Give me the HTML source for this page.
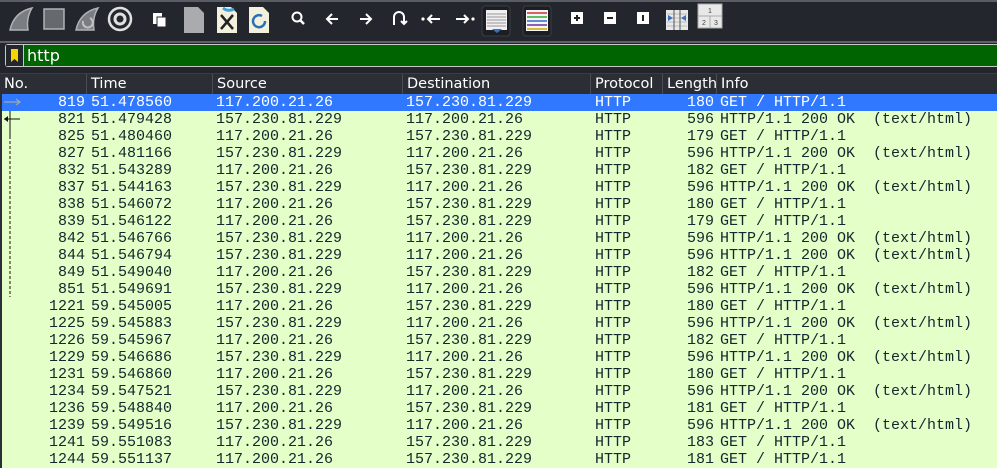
<!DOCTYPE html>
<html><head><meta charset="utf-8"><style>
*{margin:0;padding:0;box-sizing:border-box}
body{width:997px;height:468px;overflow:hidden;background:#22252b;position:relative;font-family:"DejaVu Sans","Liberation Sans",sans-serif}
.tb{position:absolute;left:0;top:0;width:997px;height:42px;background:#23262c;border-top:2px solid #5a5d63}
.sep{position:absolute;left:0;top:41px;width:997px;height:2px;background:#5f6268}
.ic{position:absolute;top:6px}
.flt{position:absolute;left:5px;top:44px;width:992px;height:23px;border:1px solid #c8c8c8;border-right:none;border-radius:3px 0 0 3px;background:#006400}
.bm{position:absolute;left:0;top:0;width:18px;height:21px;background:#23262c;border-right:1px solid #c8c8c8}
.flt span{position:absolute;left:21px;top:1px;color:#fff;font-size:16px}
.hdr{position:absolute;left:0;top:73px;width:997px;height:21px;background:#2b2e35;border-top:1px solid #3a3d44}
.hdr div{position:absolute;top:0;height:20px;color:#fff;font-size:14.5px;line-height:21px;padding-left:4px;border-left:1px solid #4a4d54}
.rows{position:absolute;left:0;top:94px;width:997px}
.r{height:17px;background:#e4ffc7;color:#12272e;font-family:"Liberation Mono","DejaVu Sans Mono",monospace;font-size:15px;line-height:17px;position:relative;white-space:pre}
.r.s{background:#2f78ff;color:#fff}
.r span{position:absolute;top:0}
.lb{position:absolute;left:0;top:94px;width:2px;height:374px;background:#2b2e35}
</style></head><body>
<div class="tb"></div><div class="sep"></div>
<svg class="ic" style="left:8px" width="26" height="26"><path d="M2 24 Q6 6 24 2 Q18 12 20 24 Z" fill="#7a7d82" stroke="#b0b2b5" stroke-width="1.5"/></svg>
<svg class="ic" style="left:42px" width="24" height="26"><rect x="2" y="3" width="20" height="20" fill="#66696e" stroke="#b0b2b5" stroke-width="1.5"/></svg>
<svg class="ic" style="left:74px" width="26" height="26"><path d="M2 24 Q6 6 24 2 Q18 12 20 24 Z" fill="#7a7d82" stroke="#b0b2b5" stroke-width="1.5"/><path d="M9 15 a5 5 0 1 0 7 -3" fill="none" stroke="#c0c2c5" stroke-width="2"/></svg>
<svg class="ic" style="left:107px" width="26" height="26"><circle cx="13" cy="13" r="11" fill="none" stroke="#e0e0e0" stroke-width="2.5"/><circle cx="13" cy="13" r="5" fill="none" stroke="#e0e0e0" stroke-width="3"/></svg>
<svg class="ic" style="left:151px" width="18" height="26"><rect x="2" y="7" width="9" height="11" fill="#fff"/><rect x="6" y="11" width="9" height="10" fill="#fff" stroke="#23262c"/></svg>
<svg class="ic" style="left:183px" width="22" height="28"><path d="M1 1 H15 L21 7 V27 H1 Z" fill="#a9abae"/></svg>
<svg class="ic" style="left:216px" width="22" height="28"><path d="M1 1 H15 L21 7 V27 H1 Z" fill="#f3f0dc"/><path d="M5 9 L17 23 M17 9 L5 23" stroke="#222" stroke-width="2.5"/><path d="M7 2 Q12 6 18 3" stroke="#3aa0e0" stroke-width="3" fill="none"/></svg>
<svg class="ic" style="left:248px" width="22" height="28"><path d="M1 1 H15 L21 7 V27 H1 Z" fill="#f3f0dc"/><path d="M14 10 a6 6 0 1 0 3 5" fill="none" stroke="#2a6fb8" stroke-width="2.5"/></svg>
<svg class="ic" style="left:288px" width="20" height="26"><circle cx="9" cy="11" r="4.5" fill="none" stroke="#fff" stroke-width="2"/><path d="M12 14 L16 18" stroke="#fff" stroke-width="2.5"/></svg>
<svg class="ic" style="left:322px" width="20" height="26"><path d="M16 13 H5 M10 8 L5 13 L10 18" fill="none" stroke="#fff" stroke-width="2"/></svg>
<svg class="ic" style="left:356px" width="20" height="26"><path d="M4 13 H15 M10 8 L15 13 L10 18" fill="none" stroke="#fff" stroke-width="2"/></svg>
<svg class="ic" style="left:389px" width="20" height="26"><path d="M5 19 V11 a5 5 0 0 1 10 0 V17 M12 15 L15 18 L18 15" fill="none" stroke="#fff" stroke-width="2"/></svg>
<svg class="ic" style="left:420px" width="22" height="26"><circle cx="3" cy="13" r="1.6" fill="#fff"/><path d="M20 13 H8 M12 9 L8 13 L12 17" fill="none" stroke="#fff" stroke-width="2"/></svg>
<svg class="ic" style="left:454px" width="22" height="26"><circle cx="19" cy="13" r="1.6" fill="#fff"/><path d="M2 13 H14 M10 9 L14 13 L10 17" fill="none" stroke="#fff" stroke-width="2"/></svg>
<svg class="ic" style="left:481px;top:5px" width="30" height="32"><rect x="1" y="1" width="28" height="30" rx="3" fill="#1c1e23" stroke="#3c3f45"/><rect x="5" y="5" width="21" height="20" fill="#f0f0f0"/><path d="M6 9H25M6 12H25M6 15H25M6 18H25M6 21H25" stroke="#999"/><path d="M11 24 H21 L16 28 Z" fill="#3a70c0"/></svg>
<svg class="ic" style="left:522px;top:5px" width="30" height="32"><rect x="1" y="1" width="28" height="30" rx="3" fill="#1c1e23" stroke="#3c3f45"/><rect x="4" y="5" width="22" height="21" fill="#f5f5f5"/><path d="M5 8H25" stroke="#c33" stroke-width="1.5"/><path d="M5 12H25" stroke="#3a3" stroke-width="1.5"/><path d="M5 16H25" stroke="#36c" stroke-width="1.5"/><path d="M5 20H25" stroke="#639" stroke-width="1.5"/><path d="M5 24H25" stroke="#ca0" stroke-width="1.5"/></svg>
<svg class="ic" style="left:570px" width="14" height="26"><rect x="1" y="6" width="12" height="12" fill="#fff"/><path d="M4 12H10M7 9V15" stroke="#222" stroke-width="2"/></svg>
<svg class="ic" style="left:603px" width="14" height="26"><rect x="1" y="6" width="12" height="12" fill="#fff"/><path d="M4 12H10" stroke="#222" stroke-width="2"/></svg>
<svg class="ic" style="left:636px" width="14" height="26"><rect x="1" y="6" width="12" height="12" fill="#fff"/><path d="M7 9V15" stroke="#222" stroke-width="2"/></svg>
<svg class="ic" style="left:665px" width="24" height="26"><rect x="1" y="4" width="22" height="20" fill="#e8e8e8"/><path d="M2 8H22M2 12H22M2 16H22M2 20H22" stroke="#bbb"/><path d="M9 4V24M15 4V24" stroke="#555"/><path d="M3 9L8 12L3 15Z M21 9L16 12L21 15Z" fill="#3a70c0"/></svg>
<svg class="ic" style="left:697px;top:3px" width="26" height="28"><rect x="1" y="1" width="24" height="24" fill="#e8e8e8" stroke="#aaa"/><path d="M1 13H25M13 13V25" stroke="#aaa"/><text x="13" y="10" font-size="7" text-anchor="middle" fill="#444" font-family="Liberation Sans">1</text><text x="7" y="22" font-size="7" text-anchor="middle" fill="#444" font-family="Liberation Sans">2</text><text x="19" y="22" font-size="7" text-anchor="middle" fill="#444" font-family="Liberation Sans">3</text></svg>

<div class="flt"><div class="bm"><svg width="17" height="21"><path d="M5 4H12V17L8.5 14L5 17Z" fill="#f5d400"/></svg></div><span>http</span></div>

<div class="hdr">
<div style="left:0;width:86px;border-left:none">No.</div>
<div style="left:86px;width:126px">Time</div>
<div style="left:212px;width:190px">Source</div>
<div style="left:402px;width:188px">Destination</div>
<div style="left:590px;width:72px">Protocol</div>
<div style="left:662px;width:54px">Length</div>
<div style="left:716px;width:281px">Info</div>
</div>

<div class="rows" id="rw"></div>
<div class="lb"></div>
<svg style="position:absolute;left:0;top:94px" width="30" height="210"><path d="M4 8H20 M16 5L20 8L16 11" stroke="#9aa" fill="none" stroke-width="1.2"/><path d="M4 25H20 M10 17V42" stroke="#111" stroke-width="1"/><path d="M4 25L8 22V28Z" fill="#111"/><path d="M10 42V203" stroke="#111" stroke-dasharray="3,2"/></svg>
<script>
var d=[["819","51.478560","117.200.21.26","157.230.81.229","180","GET / HTTP/1.1"],
["821","51.479428","157.230.81.229","117.200.21.26","596","HTTP/1.1 200 OK  (text/html)"],
["825","51.480460","117.200.21.26","157.230.81.229","179","GET / HTTP/1.1"],
["827","51.481166","157.230.81.229","117.200.21.26","596","HTTP/1.1 200 OK  (text/html)"],
["832","51.543289","117.200.21.26","157.230.81.229","182","GET / HTTP/1.1"],
["837","51.544163","157.230.81.229","117.200.21.26","596","HTTP/1.1 200 OK  (text/html)"],
["838","51.546072","117.200.21.26","157.230.81.229","180","GET / HTTP/1.1"],
["839","51.546122","117.200.21.26","157.230.81.229","179","GET / HTTP/1.1"],
["842","51.546766","157.230.81.229","117.200.21.26","596","HTTP/1.1 200 OK  (text/html)"],
["844","51.546794","157.230.81.229","117.200.21.26","596","HTTP/1.1 200 OK  (text/html)"],
["849","51.549040","117.200.21.26","157.230.81.229","182","GET / HTTP/1.1"],
["851","51.549691","157.230.81.229","117.200.21.26","596","HTTP/1.1 200 OK  (text/html)"],
["1221","59.545005","117.200.21.26","157.230.81.229","180","GET / HTTP/1.1"],
["1225","59.545883","157.230.81.229","117.200.21.26","596","HTTP/1.1 200 OK  (text/html)"],
["1226","59.545967","117.200.21.26","157.230.81.229","182","GET / HTTP/1.1"],
["1229","59.546686","157.230.81.229","117.200.21.26","596","HTTP/1.1 200 OK  (text/html)"],
["1231","59.546860","117.200.21.26","157.230.81.229","180","GET / HTTP/1.1"],
["1234","59.547521","157.230.81.229","117.200.21.26","596","HTTP/1.1 200 OK  (text/html)"],
["1236","59.548840","117.200.21.26","157.230.81.229","181","GET / HTTP/1.1"],
["1239","59.549516","157.230.81.229","117.200.21.26","596","HTTP/1.1 200 OK  (text/html)"],
["1241","59.551083","117.200.21.26","157.230.81.229","183","GET / HTTP/1.1"],
["1244","59.551137","117.200.21.26","157.230.81.229","181","GET / HTTP/1.1"]];
var h="";d.forEach(function(r,i){h+='<div class="r'+(i==0?' s':'')+'"><span style="right:912px">'+r[0]+'</span><span style="left:91px">'+r[1]+'</span><span style="left:216px">'+r[2]+'</span><span style="left:406px">'+r[3]+'</span><span style="left:595px">HTTP</span><span style="right:283px">'+r[4]+'</span><span style="left:720px">'+r[5]+'</span></div>'});
document.getElementById("rw").innerHTML=h;
</script>
</body></html>
